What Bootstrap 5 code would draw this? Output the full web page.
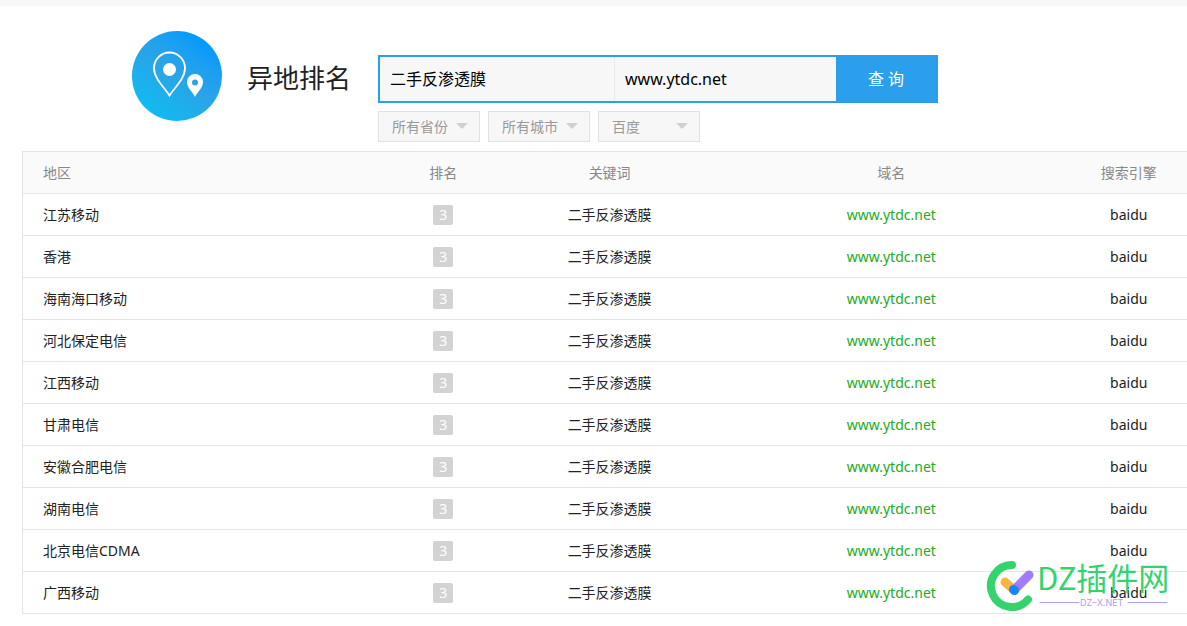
<!DOCTYPE html>
<html lang="zh-CN">
<head>
<meta charset="utf-8">
<meta name="viewport" content="width=device-width, initial-scale=1">
<title>异地排名</title>
<link href="https://cdn.jsdelivr.net/npm/bootstrap@5.3.0/dist/css/bootstrap.min.css" rel="stylesheet">
<style>
  body { font-family: "Noto Sans", "Noto Sans CJK SC", sans-serif; font-size: 14px; color: #222; background: #fff; }
  .top-strip { height: 6px; background: #f7f7f7; }
  .tool-head { padding: 25px 24px 0 132px; }
  .tool-logo { width: 90px; height: 90px; }
  .tool-title { width: 106px; margin: 30px 25px 0; font-size: 26px; font-weight: 400; line-height: 34px; white-space: nowrap; }
  .query-side { padding-top: 24px; }
  .query-box { width: 560px; max-width: 100%; height: 48px; border: 2px solid #2b9feb; background: #2b9feb; }
  .query-box .form-control { border: 0; border-radius: 0; background: #f7f7f7; color: #000; font-size: 16px; line-height: 24px; padding: 0 10px; box-shadow: none; min-width: 0; }
  .query-box .key-input { flex: 0 1 235px; border-right: 1px solid #eaeaea; }
  .query-box .site-input { flex: 0 1 221px; }
  .query-box .btn { flex: 1 0 100px; border: 0; border-radius: 0; color: #fff; background: #2b9feb; font-size: 16px; padding: 0; }
  .filter-select { width: 102px; height: 31px; border: 1px solid #e1e1e1; border-radius: 0; color: #999; font-size: 14px; line-height: 20px; padding: 0 22px 0 13px;
    background: #f7f7f7 url("data:image/svg+xml,%3Csvg xmlns='http://www.w3.org/2000/svg' width='12' height='6'%3E%3Cpath d='M0 0h12L6 6z' fill='%23d0d0d0'/%3E%3C/svg%3E") no-repeat right 11px top 11px / 12px 6px; }
  .result-area { padding: 9px 0 12px 22px; }
  .rank-table { table-layout: fixed; border-collapse: separate; border-spacing: 0; border-left: 1px solid #e5e5e5; border-top: 1px solid #e5e5e5; --bs-table-color: #222; }
  .rank-table th, .rank-table td { height: 42px; padding: 0; line-height: 20px; text-align: center; border-bottom: 1px solid #e5e5e5; white-space: nowrap; }
  .rank-table th:first-child, .rank-table td:first-child { text-align: left; padding-left: 20px; }
  .rank-table thead th { font-weight: 400; color: #888; background: #fafafa; }
  .rank-table a { color: #22ac22; text-decoration: none; }
  .rank-no { display: inline-block; width: 20px; height: 20px; border-radius: 2px; background: #d3d3d3; color: #fff; line-height: 20px; vertical-align: middle; }
  .site-mark { right: 16px; bottom: 0; width: 186px; height: 56px; pointer-events: none; }
</style>
</head>
<body>
<div class="top-strip"></div>
<header class="tool-head d-flex">
  <svg class="tool-logo flex-shrink-0" viewBox="0 0 90 90" aria-hidden="true">
    <defs><linearGradient id="sky" x1="0.2" y1="0.9" x2="0.8" y2="0.1"><stop offset="0" stop-color="#10bbf1"/><stop offset=".5" stop-color="#29a4e7"/><stop offset=".78" stop-color="#1c9ff1"/><stop offset="1" stop-color="#0099ff"/></linearGradient></defs>
    <circle cx="45" cy="45" r="45" fill="url(#sky)"/>
    <path d="M37.500 64.500C33 57 22 48 22 37a15.500 15.500 0 0 1 31 0C53 48 42 57 37.500 64.500Z" fill="none" stroke="#fff" stroke-width="1.800"/>
    <circle cx="37.500" cy="38.500" r="6.500" fill="#fff"/>
    <path fill="#fff" fill-rule="evenodd" d="M63 66C61 61.500 55 57 55 51a8 8 0 0 1 16 0C71 57 65 61.500 63 66ZM63 48.500a3 3 0 1 0 0 6a3 3 0 0 0 0-6Z"/>
  </svg>
  <h1 class="tool-title flex-shrink-0">异地排名</h1>
  <form class="query-side" onsubmit="return false">
    <div class="query-box d-flex">
      <input class="form-control key-input" type="text" value="二手反渗透膜" aria-label="关键词">
      <input class="form-control site-input" type="text" value="www.ytdc.net" aria-label="域名">
      <button class="btn" type="submit">查 询</button>
    </div>
    <div class="d-flex flex-wrap gap-2 mt-2">
      <select class="form-select filter-select" aria-label="省份"><option>所有省份</option></select>
      <select class="form-select filter-select" aria-label="城市"><option>所有城市</option></select>
      <select class="form-select filter-select" aria-label="搜索引擎"><option>百度</option></select>
    </div>
  </form>
</header>
<main class="result-area">
  <div class="position-relative">
  <table class="table rank-table align-middle mb-0">
    <colgroup><col style="width:30.6%"><col style="width:11%"><col style="width:17.6%"><col style="width:30.8%"><col></colgroup>
    <thead class="align-middle"><tr><th scope="col">地区</th><th scope="col">排名</th><th scope="col">关键词</th><th scope="col">域名</th><th scope="col">搜索引擎</th></tr></thead>
    <tbody>
      <tr><td>江苏移动</td><td><span class="rank-no">3</span></td><td>二手反渗透膜</td><td><a href="#">www.ytdc.net</a></td><td>baidu</td></tr>
      <tr><td>香港</td><td><span class="rank-no">3</span></td><td>二手反渗透膜</td><td><a href="#">www.ytdc.net</a></td><td>baidu</td></tr>
      <tr><td>海南海口移动</td><td><span class="rank-no">3</span></td><td>二手反渗透膜</td><td><a href="#">www.ytdc.net</a></td><td>baidu</td></tr>
      <tr><td>河北保定电信</td><td><span class="rank-no">3</span></td><td>二手反渗透膜</td><td><a href="#">www.ytdc.net</a></td><td>baidu</td></tr>
      <tr><td>江西移动</td><td><span class="rank-no">3</span></td><td>二手反渗透膜</td><td><a href="#">www.ytdc.net</a></td><td>baidu</td></tr>
      <tr><td>甘肃电信</td><td><span class="rank-no">3</span></td><td>二手反渗透膜</td><td><a href="#">www.ytdc.net</a></td><td>baidu</td></tr>
      <tr><td>安徽合肥电信</td><td><span class="rank-no">3</span></td><td>二手反渗透膜</td><td><a href="#">www.ytdc.net</a></td><td>baidu</td></tr>
      <tr><td>湖南电信</td><td><span class="rank-no">3</span></td><td>二手反渗透膜</td><td><a href="#">www.ytdc.net</a></td><td>baidu</td></tr>
      <tr><td>北京电信CDMA</td><td><span class="rank-no">3</span></td><td>二手反渗透膜</td><td><a href="#">www.ytdc.net</a></td><td>baidu</td></tr>
      <tr><td>广西移动</td><td><span class="rank-no">3</span></td><td>二手反渗透膜</td><td><a href="#">www.ytdc.net</a></td><td>baidu</td></tr>
    </tbody>
  </table>
  <svg class="site-mark position-absolute" viewBox="0 0 186 56" role="img" aria-label="DZ插件网">
    <g fill="none" stroke-linecap="round">
      <path d="M27 7A21 21 0 1 0 43 41.500" stroke="#35d36e" stroke-width="8"/>
      <path d="M20 24L29 32" stroke="#ffb53c" stroke-width="9"/>
      <path d="M29 32L44 17" stroke="#a27cff" stroke-width="9"/>
      <path d="M28.500 31.500L29.500 32.500" stroke="#1485fa" stroke-width="9"/>
      <path d="M55 44.500H94M143 44.500H182" stroke="#b39bfb" stroke-width="1"/>
    </g>
    <text x="52" y="32" font-size="31" fill="#35d36e" font-family="Noto Sans CJK SC, sans-serif">DZ插件网</text>
    <text x="95" y="48" font-size="9" fill="#b39bfb" font-family="Inter, sans-serif">DZ–X.NET</text>
  </svg>
  </div>
</main>
<script src="https://cdn.jsdelivr.net/npm/bootstrap@5.3.0/dist/js/bootstrap.bundle.min.js"></script>
</body>
</html>
